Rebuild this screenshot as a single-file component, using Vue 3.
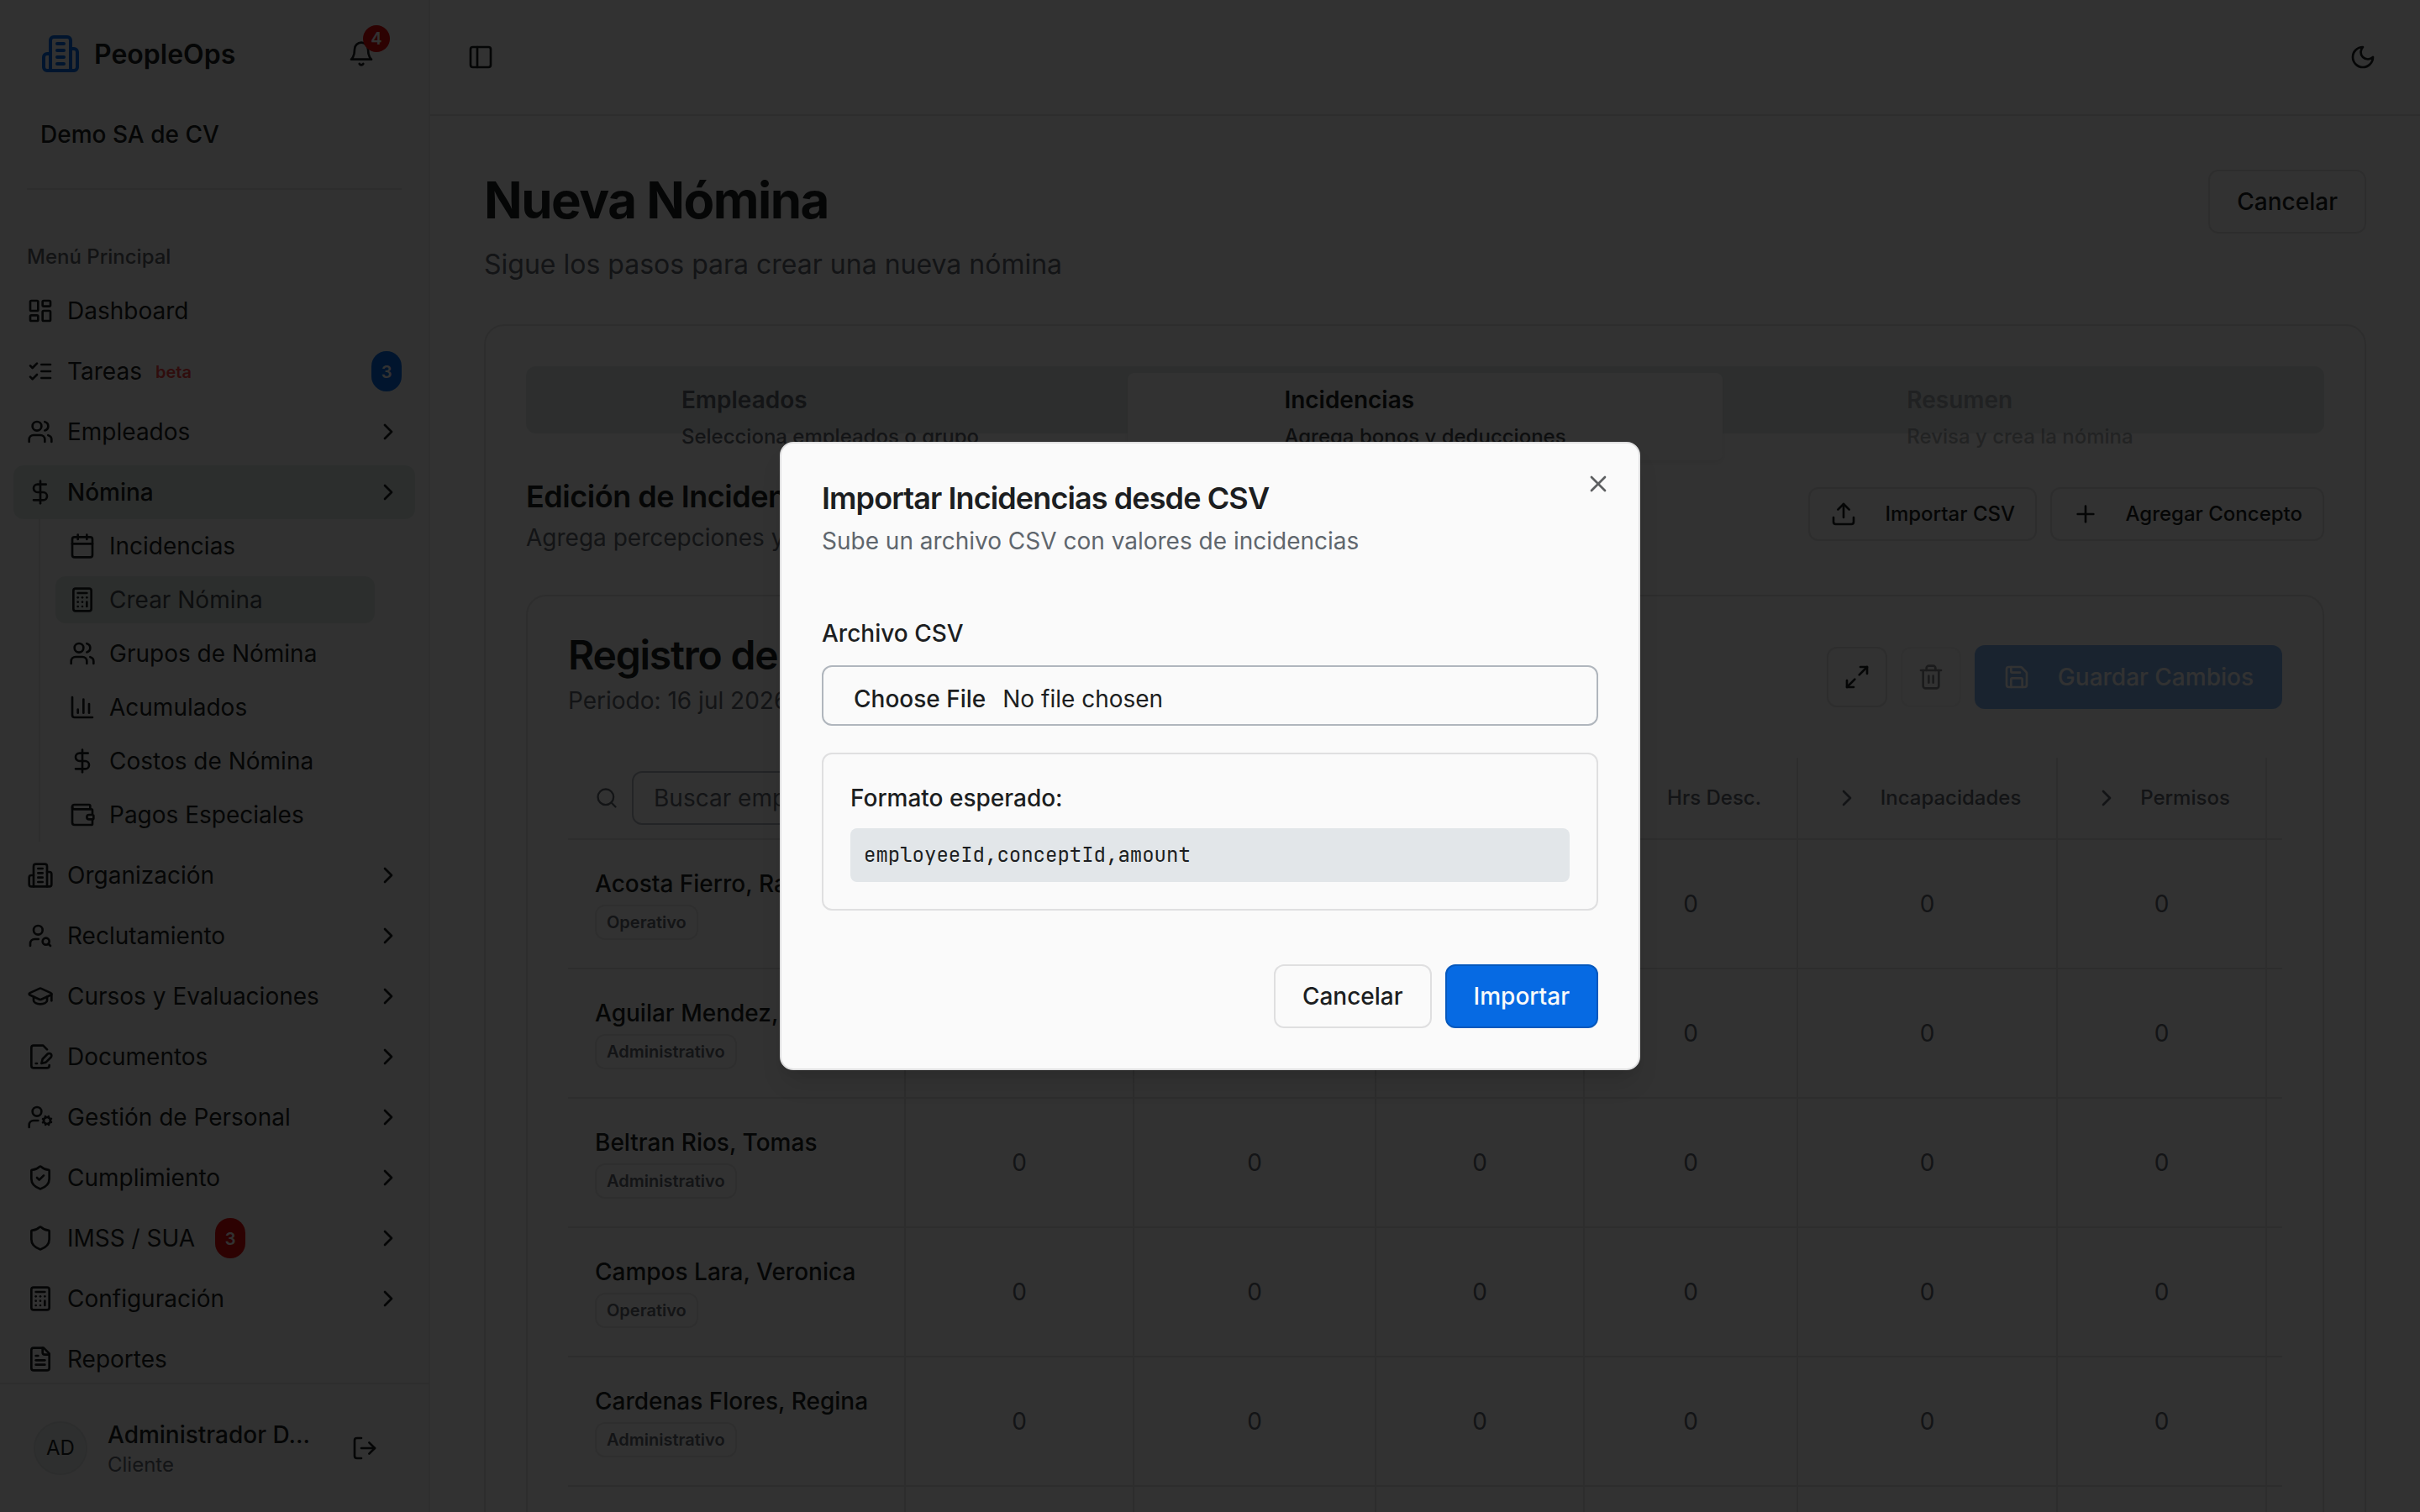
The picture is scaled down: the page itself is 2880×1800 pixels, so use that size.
<template>
  <div class="app">
    <aside class="sidebar">
      <div class="side-head">
        <div class="brand-row">
          <div class="brand">
            <Icon name="building" class="brand-icon" />
            <span class="brand-name">PeopleOps</span>
          </div>
          <button class="bell">
            <Icon name="bell" />
            <span class="bell-count">4</span>
          </button>
        </div>
        <div class="company">Demo SA de CV</div>
        <div class="side-sep"></div>
      </div>

      <nav class="menu">
        <div class="menu-label">Menú Principal</div>
        <template v-for="item in menu" :key="item.label">
          <a class="menu-item" :class="{ active: item.children }">
            <Icon :name="item.icon" />
            <span class="menu-text">{{ item.label }}</span>
            <span v-if="item.beta" class="beta">beta</span>
            <span v-if="item.alert" class="pill red">{{ item.alert }}</span>
            <span v-if="item.count" class="pill blue">{{ item.count }}</span>
            <Icon v-if="item.arrow" name="chevron" class="arrow" />
          </a>
          <div v-if="item.children" class="submenu">
            <a v-for="sub in item.children" :key="sub.label" class="sub-item" :class="{ active: sub.active }">
              <Icon :name="sub.icon" />
              <span>{{ sub.label }}</span>
            </a>
          </div>
        </template>
      </nav>

      <div class="side-foot">
        <div class="avatar">AD</div>
        <div class="user">
          <div class="user-name">Administrador D…</div>
          <div class="user-role">Cliente</div>
        </div>
        <Icon name="logout" />
      </div>
    </aside>

    <div class="main">
      <header class="topbar">
        <Icon name="panel" />
        <Icon name="moon" />
      </header>

      <main class="content">
        <div class="page-head">
          <div>
            <h1>Nueva Nómina</h1>
            <p class="lead">Sigue los pasos para crear una nueva nómina</p>
          </div>
          <button class="btn">Cancelar</button>
        </div>

        <section class="card">
          <div class="tabs">
            <div v-for="tab in tabs" :key="tab.title" class="tab" :class="tab.state">
              <div class="tab-body">
                <div class="tab-title">{{ tab.title }}</div>
                <div class="tab-desc">{{ tab.desc }}</div>
              </div>
            </div>
          </div>

          <div class="section-head">
            <div>
              <h3>Edición de Incidencias</h3>
              <p class="muted">Agrega percepciones y deducciones</p>
            </div>
            <div class="actions">
              <button class="btn small import"><Icon name="upload" />Importar CSV</button>
              <button class="btn small add"><Icon name="plus" />Agregar Concepto</button>
            </div>
          </div>

          <section class="card inner">
            <div class="grid-head">
              <div>
                <h2>Registro de Incidencias</h2>
                <p class="muted">Periodo: 16 jul 2026 - 31 jul 2026</p>
              </div>
              <div class="actions">
                <button class="btn square"><Icon name="expand" /></button>
                <button class="btn square off"><Icon name="trash" /></button>
                <button class="btn primary save"><Icon name="save" />Guardar Cambios</button>
              </div>
            </div>

            <div class="table">
              <div class="tr th">
                <div class="td first search">
                  <Icon name="search" class="search-icon" />
                  <div class="search-box">Buscar empleado...</div>
                </div>
                <div v-for="col in columns" :key="col" class="td">
                  <Icon name="chevron" />
                  <span>{{ col }}</span>
                </div>
                <div class="td last"></div>
              </div>
              <div v-for="emp in employees" :key="emp.name" class="tr">
                <div class="td first person">
                  <div class="person-name">{{ emp.name }}</div>
                  <span class="tag">{{ emp.type }}</span>
                </div>
                <div v-for="col in columns" :key="col" class="td num">0</div>
                <div class="td last"></div>
              </div>
              <div class="tr">
                <div class="td first"></div>
                <div v-for="col in columns" :key="col" class="td"></div>
              </div>
            </div>
          </section>
        </section>
      </main>
    </div>

    <div class="overlay">
      <div class="modal">
        <button class="close"><Icon name="x" /></button>
        <h2 class="modal-title">Importar Incidencias desde CSV</h2>
        <p class="modal-desc">Sube un archivo CSV con valores de incidencias</p>

        <div class="field-label">Archivo CSV</div>
        <div class="file-input">
          <span class="file-btn">Choose File</span>
          <span>No file chosen</span>
        </div>

        <div class="format">
          <div class="format-title">Formato esperado:</div>
          <code>employeeId,conceptId,amount</code>
        </div>

        <div class="modal-foot">
          <button class="btn">Cancelar</button>
          <button class="btn primary">Importar</button>
        </div>
      </div>
    </div>
  </div>
</template>

<script setup>
import { h } from 'vue'

const icons = {
  building: ['M6 22V4a2 2 0 0 1 2-2h8a2 2 0 0 1 2 2v18Z', 'M6 12H4a2 2 0 0 0-2 2v6a2 2 0 0 0 2 2h2', 'M18 9h2a2 2 0 0 1 2 2v9a2 2 0 0 1-2 2h-2', 'M10 6h4', 'M10 10h4', 'M10 14h4', 'M10 18h4'],
  bell: ['M6 8a6 6 0 0 1 12 0c0 7 3 9 3 9H3s3-2 3-9', 'M10.3 21a1.94 1.94 0 0 0 3.4 0'],
  panel: ['M5 3h14a2 2 0 0 1 2 2v14a2 2 0 0 1-2 2H5a2 2 0 0 1-2-2V5a2 2 0 0 1 2-2z', 'M9 3v18'],
  moon: ['M12 3a6 6 0 0 0 9 9 9 9 0 1 1-9-9Z'],
  dashboard: ['M4 3h5a1 1 0 0 1 1 1v7a1 1 0 0 1-1 1H4a1 1 0 0 1-1-1V4a1 1 0 0 1 1-1z', 'M15 3h5a1 1 0 0 1 1 1v3a1 1 0 0 1-1 1h-5a1 1 0 0 1-1-1V4a1 1 0 0 1 1-1z', 'M15 12h5a1 1 0 0 1 1 1v7a1 1 0 0 1-1 1h-5a1 1 0 0 1-1-1v-7a1 1 0 0 1 1-1z', 'M4 16h5a1 1 0 0 1 1 1v3a1 1 0 0 1-1 1H4a1 1 0 0 1-1-1v-3a1 1 0 0 1 1-1z'],
  tasks: ['m3 17 2 2 4-4', 'm3 7 2 2 4-4', 'M13 6h8', 'M13 12h8', 'M13 18h8'],
  users: ['M16 21v-2a4 4 0 0 0-4-4H6a4 4 0 0 0-4 4v2', 'M13 7a4 4 0 1 1-8 0a4 4 0 1 1 8 0', 'M22 21v-2a4 4 0 0 0-3-3.87', 'M16 3.13a4 4 0 0 1 0 7.75'],
  dollar: ['M12 2v20', 'M17 5H9.5a3.5 3.5 0 0 0 0 7h5a3.5 3.5 0 0 1 0 7H6'],
  calendar: ['M8 2v4', 'M16 2v4', 'M5 4h14a2 2 0 0 1 2 2v14a2 2 0 0 1-2 2H5a2 2 0 0 1-2-2V6a2 2 0 0 1 2-2z', 'M3 10h18'],
  calculator: ['M6 2h12a2 2 0 0 1 2 2v16a2 2 0 0 1-2 2H6a2 2 0 0 1-2-2V4a2 2 0 0 1 2-2z', 'M8 6h8', 'M16 14v4', 'M16 10h.01', 'M12 10h.01', 'M8 10h.01', 'M12 14h.01', 'M8 14h.01', 'M12 18h.01', 'M8 18h.01'],
  chart: ['M3 3v16a2 2 0 0 0 2 2h16', 'M18 17V9', 'M13 17V5', 'M8 17v-3'],
  wallet: ['M19 7V4a1 1 0 0 0-1-1H5a2 2 0 0 0 0 4h15a1 1 0 0 1 1 1v4h-3a2 2 0 0 0 0 4h3a1 1 0 0 0 1-1v-2a1 1 0 0 0-1-1', 'M3 5v14a2 2 0 0 0 2 2h15a1 1 0 0 0 1-1v-4'],
  userSearch: ['M14 7a4 4 0 1 1-8 0a4 4 0 1 1 8 0', 'M10.3 15H7a4 4 0 0 0-4 4v2', 'M20 17a3 3 0 1 1-6 0a3 3 0 1 1 6 0', 'm21 21-1.9-1.9'],
  cap: ['M21.42 10.922a1 1 0 0 0-.019-1.838L12.83 5.18a2 2 0 0 0-1.66 0L2.6 9.08a1 1 0 0 0 0 1.832l8.57 3.908a2 2 0 0 0 1.66 0z', 'M22 10v6', 'M6 12.5V16a6 3 0 0 0 12 0v-3.5'],
  filePen: ['M20 19.5v.5a2 2 0 0 1-2 2H6a2 2 0 0 1-2-2V4a2 2 0 0 1 2-2h8.5L18 5.5', 'M8 18h1', 'M18.42 9.61a2.1 2.1 0 1 1 2.97 2.97L16.95 17 13 18l.99-3.95 4.43-4.44Z'],
  userCog: ['M13 7a4 4 0 1 1-8 0a4 4 0 1 1 8 0', 'M10 15H6a4 4 0 0 0-4 4v2', 'M21 15a3 3 0 1 1-6 0a3 3 0 1 1 6 0', 'm21.7 16.4-.9-.3', 'm15.2 13.9-.9-.3', 'm16.6 18.7.3-.9', 'm19.1 12.2.3-.9', 'm19.6 18.7-.4-1', 'm16.8 12.3-.4-1', 'm14.3 16.6 1-.4', 'm20.7 13.8 1-.4'],
  shieldCheck: ['M20 13c0 5-3.5 7.5-7.66 8.95a1 1 0 0 1-.67-.01C7.5 20.5 4 18 4 13V6a1 1 0 0 1 1-1c2 0 4.5-1.2 6.24-2.72a1.17 1.17 0 0 1 1.52 0C14.51 3.81 17 5 19 5a1 1 0 0 1 1 1z', 'm9 12 2 2 4-4'],
  shield: ['M20 13c0 5-3.5 7.5-7.66 8.95a1 1 0 0 1-.67-.01C7.5 20.5 4 18 4 13V6a1 1 0 0 1 1-1c2 0 4.5-1.2 6.24-2.72a1.17 1.17 0 0 1 1.52 0C14.51 3.81 17 5 19 5a1 1 0 0 1 1 1z'],
  file: ['M15 2H6a2 2 0 0 0-2 2v16a2 2 0 0 0 2 2h12a2 2 0 0 0 2-2V7Z', 'M14 2v4a2 2 0 0 0 2 2h4', 'M10 9H8', 'M16 13H8', 'M16 17H8'],
  logout: ['M9 21H5a2 2 0 0 1-2-2V5a2 2 0 0 1 2-2h4', 'M16 17l5-5-5-5', 'M21 12H9'],
  chevron: ['m9 18 6-6-6-6'],
  upload: ['M21 15v4a2 2 0 0 1-2 2H5a2 2 0 0 1-2-2v-4', 'M17 8l-5-5-5 5', 'M12 3v12'],
  plus: ['M5 12h14', 'M12 5v14'],
  expand: ['M15 3h6v6', 'M9 21H3v-6', 'M21 3l-7 7', 'M3 21l7-7'],
  trash: ['M3 6h18', 'M19 6v14c0 1-1 2-2 2H7c-1 0-2-1-2-2V6', 'M8 6V4c0-1 1-2 2-2h4c1 0 2 1 2 2v2', 'M10 11v6', 'M14 11v6'],
  save: ['M15.2 3a2 2 0 0 1 1.4.6l3.8 3.8a2 2 0 0 1 .6 1.4V19a2 2 0 0 1-2 2H5a2 2 0 0 1-2-2V5a2 2 0 0 1 2-2z', 'M17 21v-7a1 1 0 0 0-1-1H8a1 1 0 0 0-1 1v7', 'M7 3v4a1 1 0 0 0 1 1h7'],
  search: ['M19 11a8 8 0 1 1-16 0a8 8 0 1 1 16 0', 'm21 21-4.3-4.3'],
  x: ['M18 6 6 18', 'm6 6 12 12']
}

const Icon = (props) => h('svg', { class: 'icon', viewBox: '0 0 24 24' }, icons[props.name].map((d) => h('path', { d })))
Icon.props = ['name']

const menu = [
  { label: 'Dashboard', icon: 'dashboard' },
  { label: 'Tareas', icon: 'tasks', beta: true, count: 3 },
  { label: 'Empleados', icon: 'users', arrow: true },
  {
    label: 'Nómina', icon: 'dollar', arrow: true,
    children: [
      { label: 'Incidencias', icon: 'calendar' },
      { label: 'Crear Nómina', icon: 'calculator', active: true },
      { label: 'Grupos de Nómina', icon: 'users' },
      { label: 'Acumulados', icon: 'chart' },
      { label: 'Costos de Nómina', icon: 'dollar' },
      { label: 'Pagos Especiales', icon: 'wallet' }
    ]
  },
  { label: 'Organización', icon: 'building', arrow: true },
  { label: 'Reclutamiento', icon: 'userSearch', arrow: true },
  { label: 'Cursos y Evaluaciones', icon: 'cap', arrow: true },
  { label: 'Documentos', icon: 'filePen', arrow: true },
  { label: 'Gestión de Personal', icon: 'userCog', arrow: true },
  { label: 'Cumplimiento', icon: 'shieldCheck', arrow: true },
  { label: 'IMSS / SUA', icon: 'shield', alert: 3, arrow: true },
  { label: 'Configuración', icon: 'calculator', arrow: true },
  { label: 'Reportes', icon: 'file' }
]

const tabs = [
  { title: 'Empleados', desc: 'Selecciona empleados o grupo', state: '' },
  { title: 'Incidencias', desc: 'Agrega bonos y deducciones', state: 'current' },
  { title: 'Resumen', desc: 'Revisa y crea la nómina', state: 'disabled' }
]

const columns = ['Hrs Extra', 'Vacaciones', 'Faltas', 'Hrs Desc.', 'Incapacidades', 'Permisos']

const employees = [
  { name: 'Acosta Fierro, Raul', type: 'Operativo' },
  { name: 'Aguilar Mendez, Sofia', type: 'Administrativo' },
  { name: 'Beltran Rios, Tomas', type: 'Administrativo' },
  { name: 'Campos Lara, Veronica', type: 'Operativo' },
  { name: 'Cardenas Flores, Regina', type: 'Administrativo' }
]
</script>

<style>
html, body { margin: 0; background: #fafafa; overflow: hidden; }
</style>

<style scoped>
.app {
  display: flex; width: 2880px; height: 1800px; overflow: hidden; position: relative;
  background: #fafafa; color: #1c1e21; font-family: Inter, sans-serif; font-size: 28px; line-height: 40px;
}
.app * { box-sizing: border-box; }
h1, h2, h3, p { margin: 0; }
button { font-family: inherit; color: inherit; cursor: pointer; }
.icon { width: 32px; height: 32px; flex-shrink: 0; fill: none; stroke: currentColor; stroke-width: 2; stroke-linecap: round; stroke-linejoin: round; }
.muted { color: #5f666d; }

/* sidebar */
.sidebar { width: 512px; height: 1800px; flex-shrink: 0; display: flex; flex-direction: column; background: #f5f5f5; border-right: 2px solid #e4e4e4; }
.side-head { padding: 32px 32px 0; }
.brand-row { display: flex; align-items: center; justify-content: space-between; height: 64px; padding: 0 32px 0 16px; }
.brand { display: flex; align-items: center; gap: 16px; font-size: 32px; font-weight: 600; }
.brand-name { padding-top: 2px; }
.brand-icon { width: 48px; height: 48px; color: #066ae3; }
.bell { position: relative; display: flex; padding: 0; border: none; background: none; }
.bell-count {
  position: absolute; top: -18px; right: -18px; width: 32px; height: 32px; border-radius: 50%;
  background: #df0a0a; color: #fafafa; font-size: 20px; font-weight: 600; line-height: 33px; text-align: center;
}
.company { margin: 44px 16px 0; font-weight: 500; }
.side-sep { height: 2px; margin-top: 44px; background: #e2e2e2; }

.menu { flex: 1; min-height: 0; overflow: hidden; display: flex; flex-direction: column; gap: 8px; padding: 48px 16px 0; }
.menu-label { height: 64px; margin-bottom: -8px; padding: 0 16px; display: flex; align-items: center; flex-shrink: 0; font-size: 24px; font-weight: 500; color: #5d6165; }
.menu-item { display: flex; align-items: center; gap: 16px; height: 64px; flex-shrink: 0; padding: 0 16px; border-radius: 12px; }
.menu-item.active { background: #dce5e2; font-weight: 500; }
.arrow { margin-left: auto; }
.beta { padding-top: 1px; font-size: 20px; font-weight: 600; color: #ef4444; }
.pill { display: flex; align-items: center; justify-content: center; width: 36px; height: 48px; padding-top: 1px; border-radius: 18px; color: #fafafa; font-size: 20px; font-weight: 600; }
.pill.red { margin-left: 8px; background: #df0a0a; }
.pill.blue { margin-left: auto; background: #066ae3; }
.submenu { display: flex; flex-direction: column; gap: 8px; margin: -8px 30px 0; padding: 4px 18px; border-left: 2px solid #e2e2e2; }
.sub-item { display: flex; align-items: center; gap: 16px; width: 380px; height: 56px; flex-shrink: 0; padding: 0 16px; border-radius: 12px; }
.sub-item.active { background: #dce5e2; color: #43484c; }
.sub-item.active .icon { color: #1c1e21; }

.side-foot { display: flex; align-items: center; height: 154px; flex-shrink: 0; padding: 0 60px 0 40px; border-top: 2px solid #e2e2e2; }
.avatar { width: 64px; height: 64px; flex-shrink: 0; border: 2px solid #dcdfe0; border-radius: 50%; background: #e6ecea; font-size: 24px; line-height: 60px; text-align: center; }
.user { flex: 1; min-width: 0; margin: 0 32px 0 24px; }
.user-name { font-weight: 500; line-height: 40px; white-space: nowrap; }
.user-role { font-size: 24px; line-height: 32px; color: #5f666d; }

/* page */
.main { flex: 1; min-width: 0; }
.topbar { display: flex; align-items: center; justify-content: space-between; height: 138px; padding: 0 52px 0 44px; border-bottom: 2px solid #dfdfe0; }
.content { padding: 64px; }
.page-head { display: flex; align-items: flex-start; justify-content: space-between; margin-bottom: 47px; }
h1 { font-size: 60px; font-weight: 700; line-height: 72px; letter-spacing: -0.025em; }
.lead { margin-top: 17px; font-size: 32px; line-height: 48px; color: #5f666d; }

.btn { display: flex; align-items: center; gap: 32px; height: 76px; padding: 0 32px; border: 2px solid #dfdfe0; border-radius: 12px; background: none; font-size: 28px; font-weight: 500; white-space: nowrap; }
.btn.small { height: 64px; padding: 0 24px 1px; font-size: 24px; justify-content: space-between; gap: 0; }
.btn.import { width: 272px; }
.btn.add { width: 326px; }
.btn.square { width: 72px; height: 72px; padding: 0; justify-content: center; }
.btn.primary { background: #066ae3; border-color: #0558bd; color: #fafafa; }
.btn.off { opacity: 0.5; border-color: #e9e9e9; }
.btn.save { width: 366px; gap: 0; justify-content: space-between; border-color: #066ae3; opacity: 0.5; }
.actions { display: flex; align-items: center; gap: 16px; }

.card { padding: 48px; border: 2px solid #e0e0e0; border-radius: 24px; background: #f7f7f7; }
.tabs { display: grid; grid-template-columns: repeat(3, 1fr); align-items: start; height: 80px; padding: 8px; border-radius: 12px; background: #dfe6e5; }
.tab { display: flex; justify-content: center; height: 104px; padding: 12px 24px; border-radius: 8px; color: #5f666d; font-weight: 500; }
.tab-title { font-weight: 600; line-height: 40px; }
.tab-desc { margin-top: 8px; font-size: 24px; line-height: 32px; }
.tab.current { background: #fafafa; color: #1c1e21; box-shadow: 0 2px 4px rgba(0, 0, 0, 0.06); }
.tab.current .tab-desc { color: #44494e; }
.tab.disabled { opacity: 0.5; }

.section-head { display: flex; align-items: center; justify-content: space-between; margin: 48px 0; }
h3 { margin-top: -1px; padding-bottom: 1px; font-size: 36px; font-weight: 600; line-height: 56px; letter-spacing: -0.013em; }
.grid-head { display: flex; align-items: center; justify-content: space-between; margin-bottom: 48px; }
.grid-head h2 { margin: -2px 0 10px; font-size: 48px; font-weight: 600; line-height: 48px; letter-spacing: -0.025em; }
.inner { height: 1400px; }

/* table */
.table { width: 2040px; overflow: hidden; background: #fafafa; }
.tr { display: grid; grid-template-columns: 402px 272px 288px 248px 254px 309px 249px 18px; height: 154px; border-bottom: 2px solid #dfdfe0; }
.tr.th { height: 98px; font-size: 24px; font-weight: 500; color: #5f666d; }
.td { display: flex; align-items: center; justify-content: center; gap: 24px; min-width: 0; border-right: 2px solid #e2e2e2; overflow: hidden; }
.td.num { color: #5f666d; }
.td.last { border-right: none; }
.td.first { justify-content: flex-start; padding: 0 32px; }
.td.search { gap: 16px; padding-right: 16px; }
.search-icon { width: 28px; height: 28px; }
.search-box { flex: 1; height: 64px; padding: 0 24px; border: 2px solid #b0b6bd; border-radius: 12px; font-size: 28px; font-weight: 400; line-height: 60px; white-space: nowrap; overflow: hidden; }
.td.person { flex-direction: column; align-items: flex-start; justify-content: flex-start; gap: 5px; padding-top: 32px; }
.person-name { font-weight: 500; white-space: nowrap; }
.tag { height: 42px; padding: 0 12px; border: 2px solid #e6e6e6; border-radius: 12px; color: #5f666d; font-size: 20px; font-weight: 600; line-height: 39px; }

/* dialog */
.overlay { position: absolute; inset: 0; display: flex; align-items: center; justify-content: center; background: rgba(0, 0, 0, 0.8); }
.modal { position: relative; width: 1024px; height: 748px; padding: 48px; border: 2px solid #dfdfe0; border-radius: 16px; background: #fafafa; box-shadow: 0 20px 30px -6px rgba(0, 0, 0, 0.1), 0 8px 12px -8px rgba(0, 0, 0, 0.1); }
.close { position: absolute; top: 32px; right: 32px; display: flex; padding: 0; border: none; background: none; opacity: 0.7; }
.modal-title { margin-top: -1px; font-size: 36px; font-weight: 600; line-height: 36px; letter-spacing: -0.025em; }
.modal-desc { margin-top: 13px; color: #5f666d; }
.field-label { margin-top: 76px; font-weight: 500; line-height: 28px; }
.file-input { display: flex; gap: 20px; height: 72px; margin-top: 24px; padding: 18px 36px 0; border: 2px solid #b0b6bd; border-radius: 12px; }
.file-btn { font-weight: 500; }
.format { height: 188px; margin-top: 32px; padding: 32px; border: 2px solid #dfdfe0; border-radius: 12px; }
.format-title { font-weight: 500; }
code { display: block; height: 64px; margin-top: 16px; padding: 0 16px; border-radius: 8px; background: #e2e6e9; font-family: 'JetBrains Mono', 'DejaVu Sans Mono', monospace; font-size: 24px; line-height: 64px; }
.modal-foot { display: flex; justify-content: flex-end; gap: 16px; margin-top: 64px; }
</style>
